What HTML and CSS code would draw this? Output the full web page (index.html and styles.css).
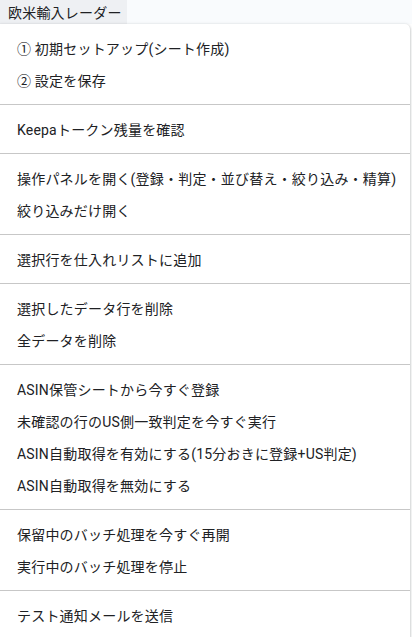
FILE: index.html
```html
<!DOCTYPE html>
<html lang="ja">
<head>
<meta charset="utf-8">
<link rel="stylesheet" href="styles.css">
</head>
<body>
<div class="topbar"><div class="tab">欧米輸入レーダー</div></div>
<div class="menu">
  <div class="item">① 初期セットアップ(シート作成)</div>
  <div class="item">② 設定を保存</div>
  <div class="sep"></div>
  <div class="item">Keepaトークン残量を確認</div>
  <div class="sep"></div>
  <div class="item">操作パネルを開く(登録・判定・並び替え・絞り込み・精算)</div>
  <div class="item">絞り込みだけ開く</div>
  <div class="sep"></div>
  <div class="item">選択行を仕入れリストに追加</div>
  <div class="sep"></div>
  <div class="item">選択したデータ行を削除</div>
  <div class="item">全データを削除</div>
  <div class="sep"></div>
  <div class="item">ASIN保管シートから今すぐ登録</div>
  <div class="item">未確認の行のUS側一致判定を今すぐ実行</div>
  <div class="item">ASIN自動取得を有効にする(15分おきに登録+US判定)</div>
  <div class="item">ASIN自動取得を無効にする</div>
  <div class="sep"></div>
  <div class="item">保留中のバッチ処理を今すぐ再開</div>
  <div class="item">実行中のバッチ処理を停止</div>
  <div class="sep"></div>
  <div class="item">テスト通知メールを送信</div>
</div>
</body>
</html>
```
FILE: styles.css
```css
html, body {
  margin: 0;
  padding: 0;
  background: #ffffff;
}
body {
  height: 637px;
  overflow: hidden;
  display: flex;
  flex-direction: column;
  font-family: Roboto, "Noto Sans CJK JP", sans-serif;
  font-size: 14px;
  letter-spacing: 0.2px;
  color: #202124;
}
.topbar {
  height: 24px;
  flex: none;
  background: #f9fbfd;
  display: flex;
}
.tab {
  height: 24px;
  width: 127px;
  box-sizing: border-box;
  padding-left: 8px;
  background: #eef0f3;
  display: flex;
  align-items: center;
  color: #202124;
}
.menu {
  flex: 1;
  min-height: 0;
  overflow: hidden;
  width: 410px;
  background: #ffffff;
  border-radius: 0 5px 0 0;
  box-shadow: 0 1px 3px 1px rgba(60, 64, 67, 0.15), 0 1px 2px rgba(60, 64, 67, 0.3);
  padding-top: 8px;
  box-sizing: border-box;
}
.item {
  height: 32px;
  display: flex;
  align-items: center;
  padding-left: 17px;
  white-space: nowrap;
}
.sep {
  height: 1px;
  background: #c7c7c7;
  margin: 8px 0;
}
```
